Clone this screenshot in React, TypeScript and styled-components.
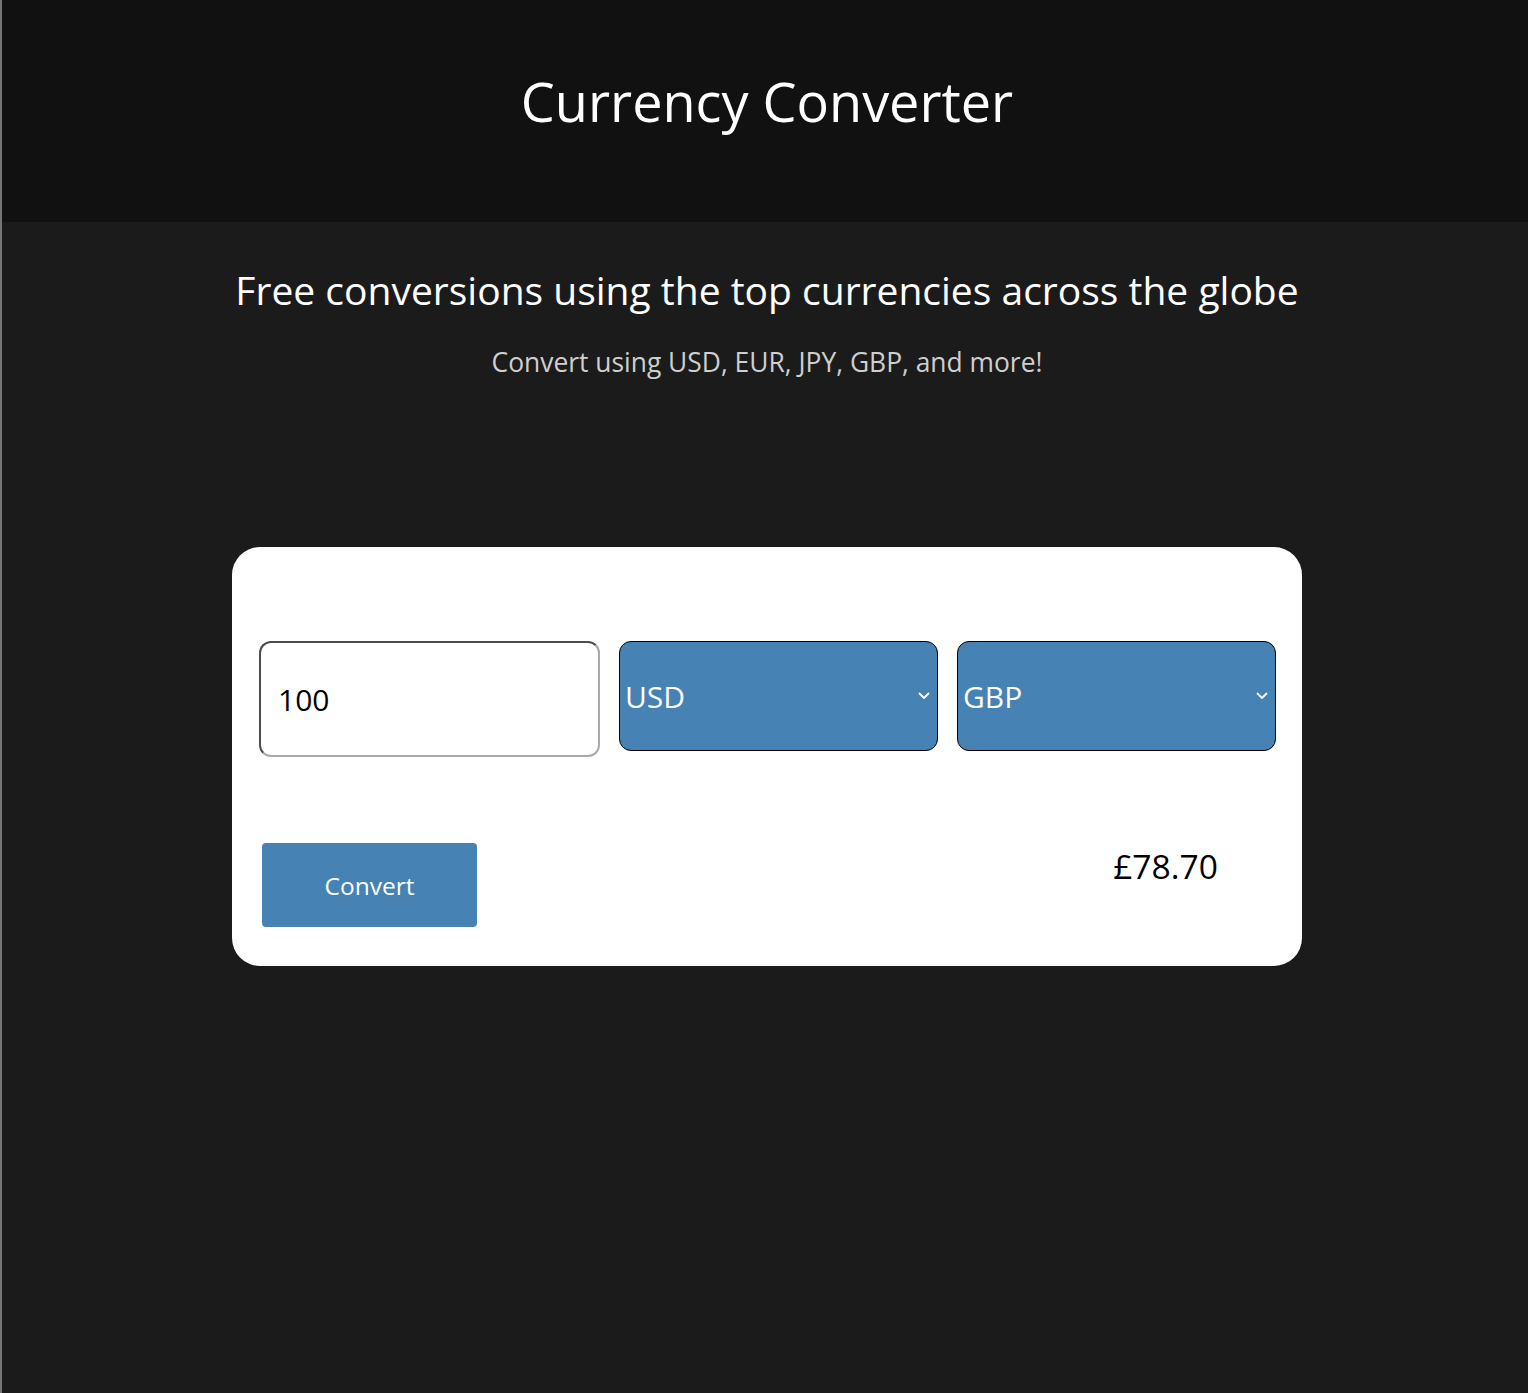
import styled, { createGlobalStyle } from "styled-components";

const GlobalStyle = createGlobalStyle`
  html, body {
    margin: 0;
    padding: 0;
    background-color: #1b1b1b;
  }

  body {
    font-family: "Open Sans", "Noto Sans", sans-serif;
  }
`;

const Page = styled.div`
  min-height: 1393px;
  border-left: 2px solid #767676;
  background-color: #1b1b1b;
  color: #ffffff;
`;

const Header = styled.header`
  height: 222px;
  box-sizing: border-box;
  padding: 64px 0 0 4px;
  background-color: #111111;
  text-align: center;

  h1 {
    margin: 0;
    font-size: 54px;
    font-weight: 400;
    line-height: 74px;
  }
`;

const Content = styled.div`
  padding-left: 4px;
`;

const Intro = styled.section`
  display: flex;
  flex-direction: column;
  align-items: center;
  padding-top: 41px;

  h2 {
    margin: 0;
    font-size: 39px;
    font-weight: 400;
    line-height: 54px;
  }

  p {
    margin: 27px 0 0;
    font-size: 26.4px;
    line-height: 36px;
    color: #cfcfcf;
  }
`;

const Card = styled.main`
  width: 1070px;
  box-sizing: border-box;
  margin: 167px auto 0;
  padding: 94px 26px 39px 27px;
  border-radius: 28px;
  background-color: #ffffff;
  color: #000000;
`;

const Fields = styled.div`
  display: flex;
  align-items: flex-start;
  gap: 19px;
`;

const AmountInput = styled.input`
  width: 341px;
  height: 116px;
  box-sizing: border-box;
  padding: 0 17px;
  margin: 0;
  border: 2px solid;
  border-color: #4d4d4d #aaaaaa #aaaaaa #4d4d4d;
  border-radius: 12px;
  font-family: inherit;
  font-size: 30px;
  color: #000000;
  background: #ffffff;
  outline: none;
`;

const SelectWrap = styled.div`
  position: relative;
  width: 320px;
  height: 110px;
`;

const CurrencySelect = styled.select`
  appearance: none;
  width: 100%;
  height: 100%;
  box-sizing: border-box;
  margin: 0;
  padding: 0 5px;
  border: 1px solid #000000;
  border-radius: 12px;
  background-color: #4682b4;
  color: #ffffff;
  font-family: inherit;
  font-size: 30px;
  outline: none;
`;

const Chevron = styled.svg`
  position: absolute;
  right: 8px;
  top: 50%;
  width: 12px;
  height: 8px;
  margin-top: -4px;
  pointer-events: none;
`;

const Actions = styled.div`
  display: flex;
  align-items: flex-start;
  justify-content: space-between;
  margin-top: 86px;
  padding: 0 58px 0 3px;
`;

const ConvertButton = styled.button`
  width: 215px;
  height: 84px;
  border: none;
  border-radius: 4px;
  background-color: #4682b4;
  color: #ffffff;
  font-family: inherit;
  font-size: 24.5px;
  cursor: pointer;
`;

const Result = styled.span`
  font-size: 33.6px;
  line-height: 46px;
`;

const currencies = ["USD", "EUR", "JPY", "GBP"];

const Select = ({ value }: { value: string }) => (
  <SelectWrap>
    <CurrencySelect defaultValue={value}>
      {currencies.map((c) => (
        <option key={c}>{c}</option>
      ))}
    </CurrencySelect>
    <Chevron viewBox="0 0 12 8">
      <path
        d="M1.5 1.5 L6 6 L10.5 1.5"
        fill="none"
        stroke="#ffffff"
        strokeWidth="1.8"
        strokeLinecap="round"
        strokeLinejoin="round"
      />
    </Chevron>
  </SelectWrap>
);

export default function App() {
  return (
    <>
      <GlobalStyle />
      <Page>
        <Header>
          <h1>Currency Converter</h1>
        </Header>
        <Content>
          <Intro>
            <h2>Free conversions using the top currencies across the globe</h2>
            <p>Convert using USD, EUR, JPY, GBP, and more!</p>
          </Intro>
          <Card>
            <Fields>
              <AmountInput type="number" defaultValue={100} />
              <Select value="USD" />
              <Select value="GBP" />
            </Fields>
            <Actions>
              <ConvertButton>Convert</ConvertButton>
              <Result>£78.70</Result>
            </Actions>
          </Card>
        </Content>
      </Page>
    </>
  );
}
